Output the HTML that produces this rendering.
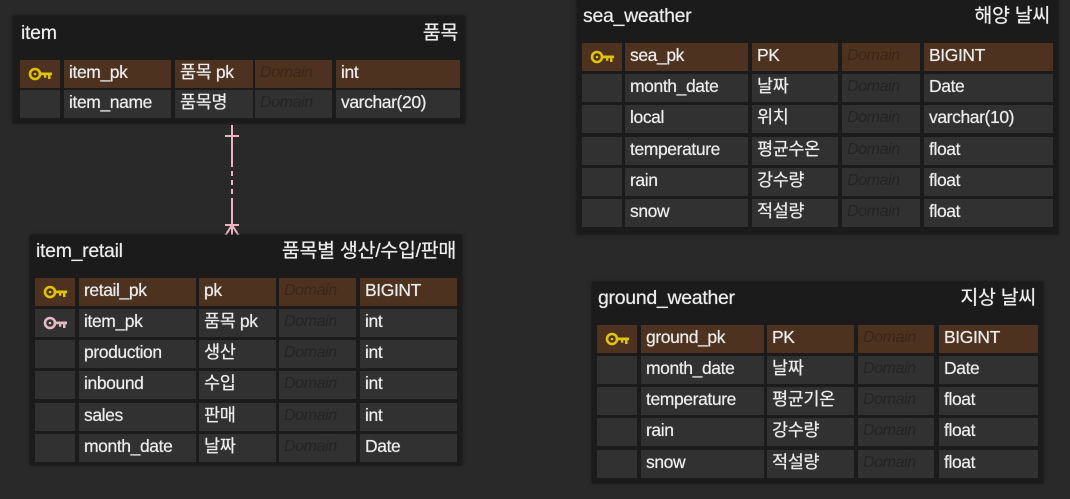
<!DOCTYPE html>
<html><head><meta charset="utf-8"><style>
body{margin:0;width:1070px;height:499px;background:#292929;position:relative;overflow:hidden;font-family:"Liberation Sans","Noto Sans CJK KR",sans-serif;color:#ececec}
.t{position:absolute;background:#1b1b1b;box-shadow:0 0 3px #111}
.h{position:absolute;font-size:19.5px;line-height:22px;white-space:nowrap;letter-spacing:-0.3px;text-shadow:0 0 0.6px #ececec}
.r{position:absolute;height:28px}
.r>div{position:absolute;top:0;height:28px;background:#313131;font-size:17.5px;line-height:25px;padding-left:5px;box-sizing:border-box;white-space:nowrap;overflow:hidden;letter-spacing:-0.4px;text-shadow:0 0 0.6px #ececec}
.r.pk>div{background:#4d331f}
.r>div.d{font-style:italic;color:#242424;font-size:16px;text-shadow:none}
.r.pk>div.d{color:#3a2617}
.r>div.k{padding:0}
.r>div.k svg{position:absolute;left:8px;top:7px}
.A .c0{left:0;width:40px}.A .c1{left:44px;width:107px}.A .c2{left:155px;width:78px}.A .c3{left:235px;width:77px}.A .c4{left:316px;width:124px}
.B .c0{left:0;width:40px}.B .c1{left:44px;width:117px}.B .c2{left:164px;width:77px}.B .c3{left:244px;width:77px}.B .c4{left:325px;width:97px}
.C .c0{left:0;width:40px}.C .c1{left:43px;width:123px}.C .c2{left:170px;width:86px}.C .c3{left:260px;width:78px}.C .c4{left:342px;width:129px}
.D .c0{left:0;width:40px}.D .c1{left:44px;width:123px}.D .c2{left:170px;width:87px}.D .c3{left:261px;width:76px}.D .c4{left:342px;width:99px}
</style></head><body>
<svg width="0" height="0" style="position:absolute"><defs>
<g id="ky"><circle cx="7" cy="7" r="5" fill="none" stroke="currentColor" stroke-width="2.6"/><circle cx="7" cy="7" r="1.3" fill="currentColor"/><path d="M12 5.5H24V8.3H22.5V12H20V8.3H18.3V10.8H16V8.3H12Z" fill="currentColor"/></g>
</defs></svg>

<!-- item -->
<div class="t" style="left:13px;top:16px;width:452px;height:107px"></div>
<div class="h" style="left:21px;top:22px">item</div>
<div class="h" style="right:612px;top:22px">품목</div>
<div class="r A pk" style="left:20px;top:60px"><div class="c0 k"><svg width="25" height="14" style="color:#e0c400"><use href="#ky"/></svg></div><div class="c1">item_pk</div><div class="c2">품목 pk</div><div class="c3 d">Domain</div><div class="c4">int</div></div>
<div class="r A" style="left:20px;top:90px"><div class="c0"></div><div class="c1">item_name</div><div class="c2">품목명</div><div class="c3 d">Domain</div><div class="c4">varchar(20)</div></div>

<!-- relation -->
<svg style="position:absolute;left:220px;top:122px" width="26" height="116">
<g stroke="#e9b5c2" stroke-width="2" fill="none">
<line x1="12" y1="3" x2="12" y2="40"/>
<line x1="12" y1="40" x2="12" y2="80" stroke-dasharray="5 4"/>
<line x1="12" y1="80" x2="12" y2="114"/>
<line x1="5" y1="14" x2="19" y2="14"/>
<line x1="5" y1="103" x2="19" y2="103"/>
<line x1="12" y1="103" x2="5" y2="114"/>
<line x1="12" y1="103" x2="19" y2="114"/>
</g></svg>

<!-- item_retail -->
<div class="t" style="left:30px;top:235px;width:432px;height:230px"></div>
<div class="h" style="left:36px;top:240px">item_retail</div>
<div class="h" style="right:614px;top:240px">품목별 생산/수입/판매</div>
<div class="r B pk" style="left:35px;top:278px"><div class="c0 k"><svg width="25" height="14" style="color:#e0c400"><use href="#ky"/></svg></div><div class="c1">retail_pk</div><div class="c2">pk</div><div class="c3 d">Domain</div><div class="c4">BIGINT</div></div>
<div class="r B" style="left:35px;top:309px"><div class="c0 k"><svg width="25" height="14" style="color:#e2b9c4"><use href="#ky"/></svg></div><div class="c1">item_pk</div><div class="c2">품목 pk</div><div class="c3 d">Domain</div><div class="c4">int</div></div>
<div class="r B" style="left:35px;top:340px"><div class="c0"></div><div class="c1">production</div><div class="c2">생산</div><div class="c3 d">Domain</div><div class="c4">int</div></div>
<div class="r B" style="left:35px;top:371px"><div class="c0"></div><div class="c1">inbound</div><div class="c2">수입</div><div class="c3 d">Domain</div><div class="c4">int</div></div>
<div class="r B" style="left:35px;top:403px"><div class="c0"></div><div class="c1">sales</div><div class="c2">판매</div><div class="c3 d">Domain</div><div class="c4">int</div></div>
<div class="r B" style="left:35px;top:434px"><div class="c0"></div><div class="c1">month_date</div><div class="c2">날짜</div><div class="c3 d">Domain</div><div class="c4">Date</div></div>

<!-- sea_weather -->
<div class="t" style="left:577px;top:-2px;width:481px;height:236px"></div>
<div class="h" style="left:583px;top:5px">sea_weather</div>
<div class="h" style="right:20px;top:5px">해양 날씨</div>
<div class="r C pk" style="left:582px;top:43px"><div class="c0 k"><svg width="25" height="14" style="color:#e0c400"><use href="#ky"/></svg></div><div class="c1">sea_pk</div><div class="c2">PK</div><div class="c3 d">Domain</div><div class="c4">BIGINT</div></div>
<div class="r C" style="left:582px;top:74px"><div class="c0"></div><div class="c1">month_date</div><div class="c2">날짜</div><div class="c3 d">Domain</div><div class="c4">Date</div></div>
<div class="r C" style="left:582px;top:105px"><div class="c0"></div><div class="c1">local</div><div class="c2">위치</div><div class="c3 d">Domain</div><div class="c4">varchar(10)</div></div>
<div class="r C" style="left:582px;top:137px"><div class="c0"></div><div class="c1">temperature</div><div class="c2">평균수온</div><div class="c3 d">Domain</div><div class="c4">float</div></div>
<div class="r C" style="left:582px;top:168px"><div class="c0"></div><div class="c1">rain</div><div class="c2">강수량</div><div class="c3 d">Domain</div><div class="c4">float</div></div>
<div class="r C" style="left:582px;top:199px"><div class="c0"></div><div class="c1">snow</div><div class="c2">적설량</div><div class="c3 d">Domain</div><div class="c4">float</div></div>

<!-- ground_weather -->
<div class="t" style="left:592px;top:282px;width:451px;height:201px"></div>
<div class="h" style="left:598px;top:287px">ground_weather</div>
<div class="h" style="right:34px;top:287px">지상 날씨</div>
<div class="r D pk" style="left:597px;top:325px"><div class="c0 k"><svg width="25" height="14" style="color:#e0c400"><use href="#ky"/></svg></div><div class="c1">ground_pk</div><div class="c2">PK</div><div class="c3 d">Domain</div><div class="c4">BIGINT</div></div>
<div class="r D" style="left:597px;top:356px"><div class="c0"></div><div class="c1">month_date</div><div class="c2">날짜</div><div class="c3 d">Domain</div><div class="c4">Date</div></div>
<div class="r D" style="left:597px;top:387px"><div class="c0"></div><div class="c1">temperature</div><div class="c2">평균기온</div><div class="c3 d">Domain</div><div class="c4">float</div></div>
<div class="r D" style="left:597px;top:418px"><div class="c0"></div><div class="c1">rain</div><div class="c2">강수량</div><div class="c3 d">Domain</div><div class="c4">float</div></div>
<div class="r D" style="left:597px;top:450px"><div class="c0"></div><div class="c1">snow</div><div class="c2">적설량</div><div class="c3 d">Domain</div><div class="c4">float</div></div>
</body></html>
